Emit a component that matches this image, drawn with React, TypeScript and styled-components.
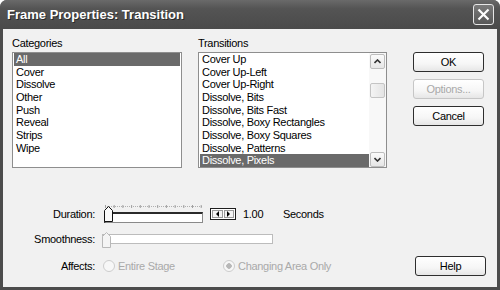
import React from "react";
import styled, { createGlobalStyle } from "styled-components";

const categories = ["All", "Cover", "Dissolve", "Other", "Push", "Reveal", "Strips", "Wipe"];
const transitions = [
    "Cover Up",
    "Cover Up-Left",
    "Cover Up-Right",
    "Dissolve, Bits",
    "Dissolve, Bits Fast",
    "Dissolve, Boxy Rectangles",
    "Dissolve, Boxy Squares",
    "Dissolve, Patterns",
    "Dissolve, Pixels",
];

const ThumbIcon = ({ light }: { light?: boolean }) => (
    <svg width="9" height="16" viewBox="0 0 9 16">
        <path
            d="M0.5 4.5 L4.5 0.5 L8.5 4.5 L8.5 15.5 L0.5 15.5 Z"
            fill={light ? "#f4f4f4" : "#fafafa"}
            stroke={light ? "#b8b8b8" : "#111"}
        />
    </svg>
);

const Chevron = ({ up }: { up?: boolean }) => (
    <svg width="7" height="5" viewBox="0 0 7 5">
        <path d={up ? "M0.5 4 L3.5 1 L6.5 4" : "M0.5 1 L3.5 4 L6.5 1"} fill="none" stroke="#333" strokeWidth="1.6" />
    </svg>
);

const Ticks = () => (
    <svg width="99" height="4" viewBox="0 0 99 4">
        <line x1="1" y1="1.5" x2="98" y2="1.5" stroke="#b0b0b0" strokeDasharray="1 1" />
        {Array.from({ length: 12 }).map((_, i) => (
            <line key={i} x1={1.5 + i * 8.7} y1="0" x2={1.5 + i * 8.7} y2="3" stroke="#a0a0a0" />
        ))}
    </svg>
);

const App = () => {
    return (
        <>
            <GlobalStyle />
            <Window>
                <TitleBar>
                    <Title>Frame Properties: Transition</Title>
                    <CloseButton>
                        <svg width="13" height="13" viewBox="0 0 13 13">
                            <path d="M1.5 1.5 L11.5 11.5 M11.5 1.5 L1.5 11.5" stroke="#fff" strokeWidth="2.2" />
                        </svg>
                    </CloseButton>
                </TitleBar>
                <Body>
                    <TopRow>
                        <Column $width={170}>
                            <GroupLabel>Categories</GroupLabel>
                            <ListBox>
                                <Rows>
                                    {categories.map((c, i) => (
                                        <Row key={c} $selected={i === 0}>
                                            {c}
                                        </Row>
                                    ))}
                                </Rows>
                            </ListBox>
                        </Column>
                        <Column $width={189}>
                            <GroupLabel>Transitions</GroupLabel>
                            <ListBox>
                                <Rows>
                                    {transitions.map((t, i) => (
                                        <Row key={t} $selected={i === transitions.length - 1}>
                                            {t}
                                        </Row>
                                    ))}
                                </Rows>
                                <ScrollBar>
                                    <ScrollButton>
                                        <Chevron up />
                                    </ScrollButton>
                                    <ScrollThumb />
                                    <ScrollButton $bottom>
                                        <Chevron />
                                    </ScrollButton>
                                </ScrollBar>
                            </ListBox>
                        </Column>
                        <ButtonStack>
                            <Button>OK</Button>
                            <Button $disabled>Options...</Button>
                            <Button>Cancel</Button>
                        </ButtonStack>
                    </TopRow>

                    <SettingRow $top={36}>
                        <SettingLabel>Duration:</SettingLabel>
                        <Slider $width={99} $offset={2}>
                            <Ticks />
                            <Track $width={99} />
                            <Thumb $top={2}>
                                <ThumbIcon />
                            </Thumb>
                        </Slider>
                        <Spinner>
                            <SpinCell>
                                <Arrow $dir="left" />
                            </SpinCell>
                            <SpinCell>
                                <Arrow $dir="right" />
                            </SpinCell>
                        </Spinner>
                        <Value>1.00</Value>
                        <span>Seconds</span>
                    </SettingRow>

                    <SettingRow $top={5}>
                        <SettingLabel>Smoothness:</SettingLabel>
                        <Slider $width={171}>
                            <Track $width={171} $light />
                            <Thumb $top={3}>
                                <ThumbIcon light />
                            </Thumb>
                        </Slider>
                    </SettingRow>

                    <SettingRow $top={7}>
                        <SettingLabel>Affects:</SettingLabel>
                        <RadioOption $width={119}>
                            <Radio />
                            Entire Stage
                        </RadioOption>
                        <RadioOption>
                            <Radio $checked />
                            Changing Area Only
                        </RadioOption>
                        <HelpButton>Help</HelpButton>
                    </SettingRow>
                </Body>
            </Window>
        </>
    );
};

export default App;

const GlobalStyle = createGlobalStyle`
    html, body {
        margin: 0;
        padding: 0;
        background: #fff;
    }
    body {
        font-family: "Liberation Sans", Arial, sans-serif;
        font-size: 11px;
        letter-spacing: -0.3px;
        color: #000;
    }
`;

const Window = styled.div`
    width: 500px;
    height: 290px;
    display: flex;
    flex-direction: column;
    background: #4c4c4c;
    border-radius: 7px 7px 0 0;
    overflow: hidden;
`;

const TitleBar = styled.div`
    height: 29px;
    flex-shrink: 0;
    display: flex;
    align-items: center;
    justify-content: space-between;
    padding: 0 6px 0 7px;
    background: linear-gradient(#6a6a6a, #545454 30%, #4a4a4a);
`;

const Title = styled.div`
    color: #fff;
    font-weight: bold;
    font-size: 13px;
    letter-spacing: 0;
    text-shadow: 1px 1px 0 #2a2a2a;
`;

const CloseButton = styled.div`
    width: 21px;
    height: 21px;
    box-sizing: border-box;
    border: 1px solid #e6e6e6;
    border-radius: 3px;
    background: linear-gradient(#7a7a7a, #585858);
    display: flex;
    align-items: center;
    justify-content: center;
`;

const Body = styled.div`
    flex: 1;
    margin: 0 3px 3px;
    background: #f1f1f1;
    padding: 8px 11px 0 9px;
    display: flex;
    flex-direction: column;
`;

const TopRow = styled.div`
    display: flex;
    align-items: flex-start;
    gap: 16px;
`;

const Column = styled.div<{ $width: number }>`
    width: ${(p) => p.$width}px;
    display: flex;
    flex-direction: column;
`;

const GroupLabel = styled.div`
    height: 13px;
    line-height: 13px;
    margin: 0 0 2px 0;
`;

const ListBox = styled.div`
    height: 116px;
    box-sizing: border-box;
    border: 1px solid #8e8e8e;
    background: #fff;
    display: flex;
    padding: 0 1px 0 1px;
`;

const Rows = styled.div`
    flex: 1;
    display: flex;
    flex-direction: column;
`;

const Row = styled.div<{ $selected?: boolean }>`
    height: 12.66px;
    line-height: 12.66px;
    padding-left: 2px;
    white-space: nowrap;
    background: ${(p) => (p.$selected ? "#6a6a6a" : "transparent")};
    color: ${(p) => (p.$selected ? "#fff" : "#000")};
`;

const ScrollBar = styled.div`
    width: 17px;
    margin-right: -1px;
    display: flex;
    flex-direction: column;
    background: #f8f8f8;
`;

const ScrollButton = styled.div<{ $bottom?: boolean }>`
    height: 15px;
    box-sizing: border-box;
    margin: ${(p) => (p.$bottom ? "auto 1px 0" : "1px 1px 0")};
    border: 1px solid #bdbdbd;
    border-radius: 2px;
    background: linear-gradient(#fbfbfb, #e6e6e6);
    display: flex;
    align-items: center;
    justify-content: center;
`;

const ScrollThumb = styled.div`
    height: 15px;
    box-sizing: border-box;
    margin: 14px 1px 0;
    border: 1px solid #c4c4c4;
    border-radius: 2px;
    background: linear-gradient(90deg, #f4f4f4, #e4e4e4);
`;

const ButtonStack = styled.div`
    margin: 15px 0 0 10px;
    display: flex;
    flex-direction: column;
    gap: 7px;
`;

const Button = styled.div<{ $disabled?: boolean }>`
    width: 71px;
    height: 20px;
    box-sizing: border-box;
    border: 1px solid ${(p) => (p.$disabled ? "#c6c6c6" : "#2e2e2e")};
    border-radius: 3px;
    background: linear-gradient(#ffffff, #f6f6f6 60%, #e6e6e6);
    color: ${(p) => (p.$disabled ? "#a8a8a8" : "#000")};
    display: flex;
    align-items: center;
    justify-content: center;
`;

const HelpButton = styled(Button)`
    margin-left: auto;
`;

const SettingRow = styled.div<{ $top: number }>`
    height: 20px;
    margin-top: ${(p) => p.$top}px;
    display: flex;
    align-items: center;
`;

const SettingLabel = styled.div`
    width: 83px;
    margin-right: 7px;
    text-align: right;
`;

const Slider = styled.div<{ $width: number; $offset?: number }>`
    position: relative;
    width: ${(p) => p.$width}px;
    height: 20px;
    margin-left: ${(p) => p.$offset || 0}px;
    display: flex;
    flex-direction: column;
    justify-content: center;
    gap: 3px;
`;

const Track = styled.div<{ $width: number; $light?: boolean }>`
    width: ${(p) => p.$width}px;
    height: ${(p) => (p.$light ? 10 : 11)}px;
    box-sizing: border-box;
    background: #fff;
    border: 1px solid ${(p) => (p.$light ? "#bcbcbc" : "#8a8a8a")};
    border-top: ${(p) => (p.$light ? "1px solid #bcbcbc" : "2px solid #2a2a2a")};
    border-left: ${(p) => (p.$light ? "1px solid #bcbcbc" : "2px solid #2a2a2a")};
`;

const Thumb = styled.div<{ $top: number }>`
    position: absolute;
    left: 0;
    top: ${(p) => p.$top}px;
    height: 16px;
`;

const Spinner = styled.div`
    margin-left: 7px;
    width: 26px;
    height: 12px;
    box-sizing: border-box;
    border: 1px solid #1e1e1e;
    display: flex;
    padding: 1px;
    gap: 1px;
    background: #fff;
`;

const SpinCell = styled.div`
    flex: 1;
    border: 1px solid #9a9a9a;
    display: flex;
    align-items: center;
    justify-content: center;
    background: #f4f4f4;
`;

const Arrow = styled.div<{ $dir: "left" | "right" }>`
    width: 0;
    height: 0;
    border-top: 3px solid transparent;
    border-bottom: 3px solid transparent;
    ${(p) => (p.$dir === "left" ? "border-right: 3px solid #000;" : "border-left: 3px solid #000;")}
`;

const Value = styled.span`
    width: 40px;
    margin-left: 7px;
`;

const RadioOption = styled.div<{ $width?: number }>`
    width: ${(p) => (p.$width ? `${p.$width}px` : "auto")};
    margin-left: 1px;
    display: flex;
    align-items: center;
    gap: 3px;
    color: #a9a9a9;
`;

const Radio = styled.span<{ $checked?: boolean }>`
    width: 12px;
    height: 12px;
    box-sizing: border-box;
    border-radius: 50%;
    border: 1px solid #cdcdcd;
    background: ${(p) => (p.$checked ? "radial-gradient(circle, #b8b8b8 0 2.5px, #f7f7f7 3px)" : "#f7f7f7")};
`;
